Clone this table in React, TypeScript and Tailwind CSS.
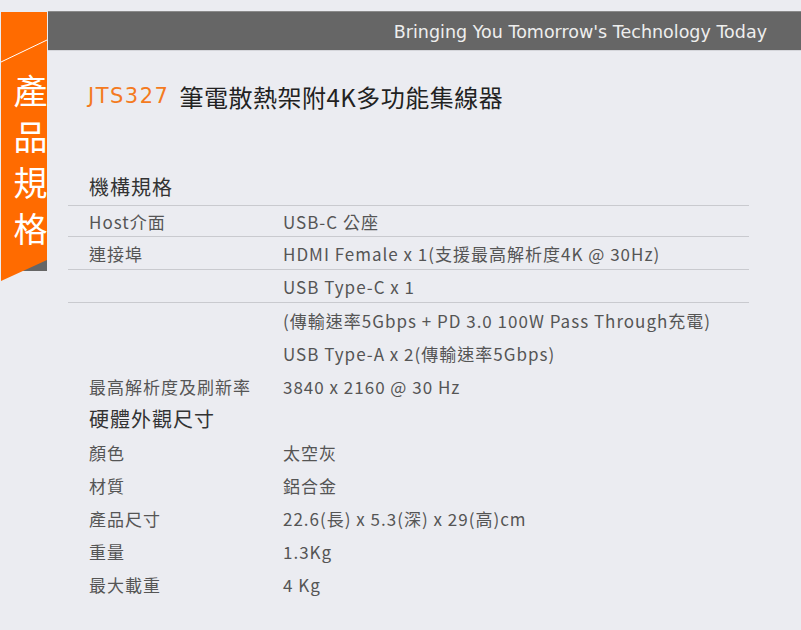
import React from 'react';

const cjk = "font-['Noto_Sans_CJK_TC','Noto_Sans',sans-serif]";

interface SpecRow {
  label?: string;
  value: string;
  line?: boolean;
}

const mechanical: SpecRow[] = [
  { label: 'Host介面', value: 'USB-C 公座', line: true },
  { label: '連接埠', value: 'HDMI Female x 1(支援最高解析度4K @ 30Hz)', line: true },
  { value: 'USB Type-C x 1', line: true },
  { value: '(傳輸速率5Gbps + PD 3.0 100W Pass Through充電)' },
  { value: 'USB Type-A x 2(傳輸速率5Gbps)' },
  { label: '最高解析度及刷新率', value: '3840 x 2160 @ 30 Hz' },
];

const hardware: SpecRow[] = [
  { label: '顏色', value: '太空灰' },
  { label: '材質', value: '鋁合金' },
  { label: '產品尺寸', value: '22.6(長) x 5.3(深) x 29(高)cm' },
  { label: '重量', value: '1.3Kg' },
  { label: '最大載重', value: '4 Kg' },
];

function Row({ row, first }: { row: SpecRow; first?: boolean }) {
  return (
    <div
      className={`flex items-center pt-[2px] text-[17px] tracking-[1px] text-[#555] ${
        first ? 'h-[31px]' : 'h-[33px]'
      } ${row.line ? 'border-b border-[#c9cacf]' : ''}`}
    >
      <div className="w-[215px] shrink-0 pl-[21px] whitespace-nowrap">{row.label}</div>
      <div className="whitespace-nowrap">{row.value}</div>
    </div>
  );
}

function Ribbon() {
  return (
    <div className="relative w-[48px] shrink-0 h-[272px]">
      <svg className="absolute left-0 top-0" width="48" height="272" viewBox="0 0 48 272">
        <polygon points="47,244 47,260 22,260" fill="#666" />
        <polygon points="1,1 47,1 47,249 1,270" fill="#ff6b00" />
        <line x1="1" y1="51" x2="47" y2="29" stroke="#fff" strokeWidth="1" />
      </svg>
      {/* 直排標籤 */}
      <div className={`relative flex flex-col items-center pt-[56px] pl-[13px] text-[34px] leading-[46px] text-white ${cjk}`}>
        <span>產</span>
        <span>品</span>
        <span>規</span>
        <span>格</span>
      </div>
    </div>
  );
}

export default function App() {
  return (
    <div className={`min-h-screen w-full bg-[#ebecf1] pt-[11px] flex ${cjk}`}>
      <Ribbon />
      <div className="flex-1 min-w-0">
        <div className="h-[40px] bg-[#666] border-t border-[#8a8a8a] border-b border-b-[#d5d6db] flex items-center justify-end pr-[34px]">
          <span className="font-['DejaVu_Sans',sans-serif] text-[17.5px] text-[#eeeeee] pt-[2px]">
            Bringing You Tomorrow's Technology Today
          </span>
        </div>

        <h1 className="mt-[31px] pl-[40px] flex items-center h-[30px] whitespace-nowrap">
          <span className="font-['DejaVu_Sans',sans-serif] text-[21px] tracking-[1.5px] text-[#f47a20] mr-[10px]">JTS327</span>
          <span className="text-[24px] tracking-[0.5px] text-[#222]">筆電散熱架附4K多功能集線器</span>
        </h1>

        <div className="ml-[20px] w-[681px] mt-[61px]">
          <h2 className="pl-[21px] h-[28px] mb-[4px] flex items-center text-[20px] tracking-[1px] text-[#333]">
            機構規格
          </h2>
          <div className="border-t border-[#c9cacf]">
            {mechanical.map((row, i) => (
              <Row key={i} row={row} first={i === 0} />
            ))}
          </div>
          <h2 className="pl-[21px] h-[33px] flex items-center text-[20px] tracking-[1px] text-[#333]">
            硬體外觀尺寸
          </h2>
          {hardware.map((row, i) => (
            <Row key={i} row={row} />
          ))}
        </div>
      </div>
    </div>
  );
}
